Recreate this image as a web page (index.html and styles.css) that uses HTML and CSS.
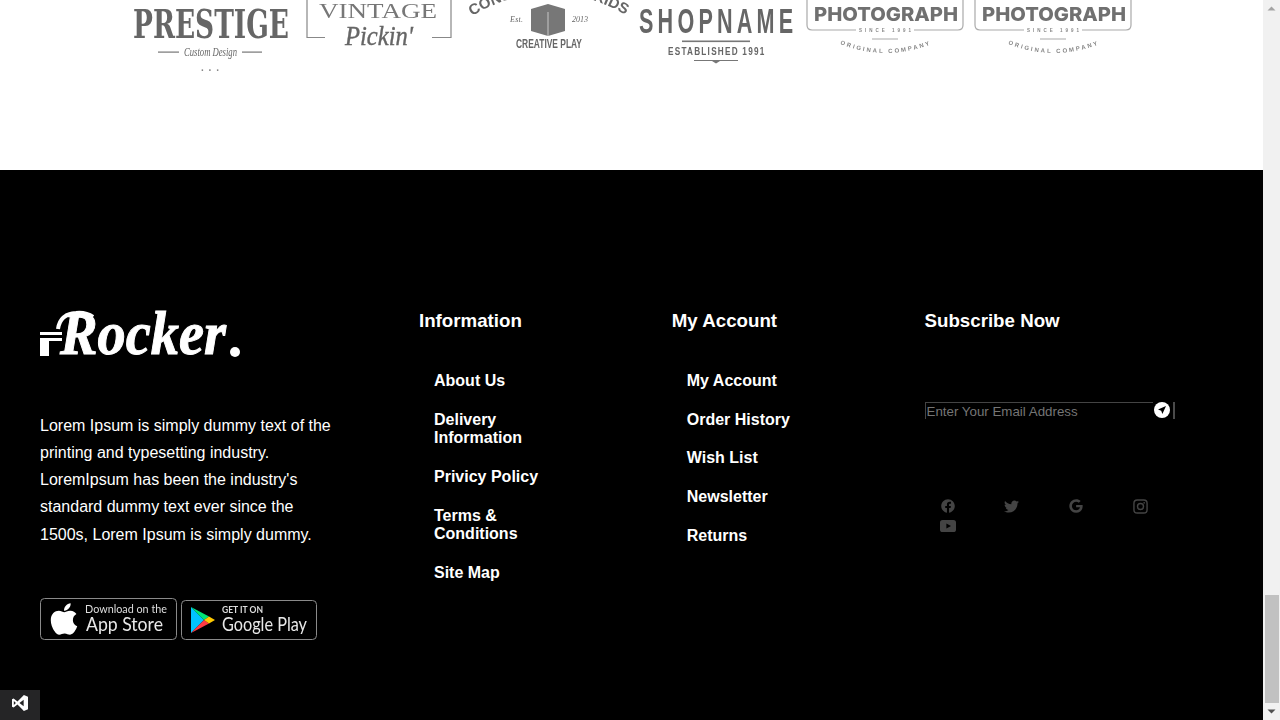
FILE: index.html
```html
<!DOCTYPE html>
<html lang="en">
<head>
<meta charset="utf-8">
<title>Rocker</title>
<link rel="stylesheet" href="styles.css">
</head>
<body>
<div class="page">
  <section class="brands">
    <svg class="brand" viewBox="133 0 156 72" width="156" height="72">
      <text class="t-serif" x="133" y="38" font-size="39" textLength="156" lengthAdjust="spacingAndGlyphs">PRESTIGE</text>
      <rect class="fill" x="158" y="51.5" width="21" height="1.2"/><rect class="fill" x="242" y="51.5" width="20" height="1.2"/>
      <text class="t-script" x="184" y="56" font-size="12" textLength="53" lengthAdjust="spacingAndGlyphs">Custom Design</text>
      <text class="t-bold" x="201" y="71" font-size="10" textLength="18">...</text>
    </svg>
    <svg class="brand" viewBox="301 0 156 72" width="156" height="72">
      <path class="line" d="M307 0V37.5H325M451 0V37.5H432"/>
      <text class="t-serif-light" x="319" y="18" font-size="21" textLength="118" lengthAdjust="spacingAndGlyphs">VINTAGE</text>
      <text class="t-pick" x="345" y="45" font-size="27" textLength="68" lengthAdjust="spacingAndGlyphs">Pickin'</text>
    </svg>
    <svg class="brand" viewBox="470 0 156 72" width="156" height="72">
      <defs><path id="arc" d="M472 16 Q549 -30 628 16"/></defs>
      <text class="t-cond" font-size="15"><textPath href="#arc" textLength="162" lengthAdjust="spacingAndGlyphs">CONSTRUCTION KIDS</textPath></text>
      <path class="fill" d="M531 9 548 4 565 9V31L548 36 531 31Z"/>
      <path d="M548 12V36" stroke="#fff" stroke-width=".6"/>
      <text class="t-script" x="510" y="22" font-size="8" textLength="13">Est.</text>
      <text class="t-script" x="572" y="22" font-size="8" textLength="16">2013</text>
      <text class="t-cond" x="516" y="48" font-size="12" textLength="66" lengthAdjust="spacingAndGlyphs">CREATIVE PLAY</text>
    </svg>
    <svg class="brand" viewBox="638 0 156 72" width="156" height="72">
      <text class="t-cond" transform="translate(639 33) scale(.6 1)" font-size="36" letter-spacing="7">SHOPNAME</text>
      <rect class="fill" x="682" y="40.5" width="68" height="1.6"/>
      <text class="t-cond" transform="translate(668 55) scale(.78 1)" font-size="10.5" letter-spacing="1.6">ESTABLISHED 1991</text>
      <path class="fill" d="M694 60H738V61H720L716 63.5 712 61H694Z"/>
    </svg>
    <svg class="brand" viewBox="806 0 156 72" width="156" height="72">
      <defs><path id="arc5" d="M840 44 Q885 62 932 44"/></defs>
      <path class="line-soft" d="M807 0V25Q807 30 812 30H856M914 30H958Q963 30 963 25V0M872 39H898"/>
      <text class="t-wide" x="814" y="21" font-size="19" textLength="144" lengthAdjust="spacingAndGlyphs">PHOTOGRAPH</text>
      <text class="t-bold" x="859" y="32" font-size="4.5" textLength="52">SINCE 1991</text>
      <text class="t-bold" font-size="6"><textPath href="#arc5" textLength="92">ORIGINAL COMPANY</textPath></text>
    </svg>
    <svg class="brand" viewBox="806 0 156 72" width="156" height="72">
      <path class="line-soft" d="M807 0V25Q807 30 812 30H856M914 30H958Q963 30 963 25V0M872 39H898"/>
      <text class="t-wide" x="814" y="21" font-size="19" textLength="144" lengthAdjust="spacingAndGlyphs">PHOTOGRAPH</text>
      <text class="t-bold" x="859" y="32" font-size="4.5" textLength="52">SINCE 1991</text>
      <text class="t-bold" font-size="6"><textPath href="#arc5" textLength="92">ORIGINAL COMPANY</textPath></text>
    </svg>
  </section>

  <footer class="footer">
    <div class="col col-about">
      <svg class="logo" viewBox="0 0 200 50" width="200" height="50">
        <path class="logo-swash" d="M18 19Q20 4 36 3Q46 2 53 7" />
        <rect x="0" y="22" width="22" height="3" fill="#fff"/>
        <path d="M0 28H22V31H9V46H0Z" fill="#fff"/>
        <text class="logo-word" x="20" y="44" font-size="62" textLength="166" lengthAdjust="spacingAndGlyphs">Rocker</text>
        <circle cx="195" cy="42" r="5" fill="#fff"/>
      </svg>
      <p class="about">Lorem Ipsum is simply dummy text of the printing and typesetting industry. LoremIpsum has been the industry's standard dummy text ever since the 1500s, Lorem Ipsum is simply dummy.</p>
      <div class="badges">
        <svg class="badge" viewBox="0 0 137 42" width="137" height="42">
          <rect class="badge-frame" x=".5" y=".5" width="136" height="41" rx="4"/>
          <svg x="10" y="3" width="28" height="36" viewBox="0 0 384 512"><path fill="#fff" d="M318.7 268.7c-.2-36.7 16.4-64.4 50-84.8-18.8-26.9-47.2-41.7-84.7-44.6-35.5-2.8-74.3 20.7-88.5 20.7-15 0-49.4-19.7-76.4-19.7C63.3 141.2 4 184.8 4 273.5q0 39.3 14.4 81.2c12.8 36.7 59 126.7 107.2 125.2 25.2-.6 43-17.9 75.8-17.9 31.8 0 48.3 17.9 76.4 17.9 48.6-.7 90.4-82.5 102.6-119.3-65.2-30.7-61.7-90-61.7-91.9zm-56.6-164.2c27.3-32.4 24.8-61.9 24-72.5-24.1 1.4-52 16.4-67.9 34.9-17.5 19.8-27.8 44.3-25.6 71.9 26.1 2 49.9-11.4 69.5-34.3z"/></svg>
          <text class="badge-small" x="45" y="15" font-size="11" textLength="82" lengthAdjust="spacingAndGlyphs">Download on the</text>
          <text class="badge-big" x="46" y="33" font-size="20" textLength="77" lengthAdjust="spacingAndGlyphs">App Store</text>
        </svg>
        <svg class="badge" viewBox="0 0 136 40" width="136" height="40">
          <rect class="badge-frame" x=".5" y=".5" width="135" height="39" rx="4"/>
          <path fill="#00c3ff" d="M10 7V33L23 20Z"/>
          <path fill="#00e676" d="M10 7 28 16.5 23 20Z"/>
          <path fill="#ff3a44" d="M10 33 28 23.5 23 20Z"/>
          <path fill="#ffc900" d="M28 16.5 34 20 28 23.5 23 20Z"/>
          <text class="badge-tiny" x="41" y="13" font-size="8.5" textLength="41" lengthAdjust="spacingAndGlyphs">GET IT ON</text>
          <text class="badge-big" x="41" y="31" font-size="19" textLength="85" lengthAdjust="spacingAndGlyphs">Google Play</text>
        </svg>
      </div>
    </div>

    <div class="col">
      <h3 class="col-title">Information</h3>
      <ul class="links">
        <li>About Us</li>
        <li>Delivery Information</li>
        <li>Privicy Policy</li>
        <li>Terms &amp; Conditions</li>
        <li>Site Map</li>
      </ul>
    </div>

    <div class="col">
      <h3 class="col-title">My Account</h3>
      <ul class="links">
        <li>My Account</li>
        <li>Order History</li>
        <li>Wish List</li>
        <li>Newsletter</li>
        <li>Returns</li>
      </ul>
    </div>

    <div class="col">
      <h3 class="col-title">Subscribe Now</h3>
      <form class="subscribe">
        <input class="email" type="text" placeholder="Enter Your Email Address">
        <span class="send">
          <svg viewBox="0 0 16 16" width="16" height="16"><circle cx="8" cy="8" r="8" fill="#fff"/><path d="M12 4 4 7.6 7.2 8.8 8.4 12Z"/></svg>
        </span>
      </form>
      <div class="socials">
        <span class="social"><svg class="ico-14" viewBox="0 0 512 512"><path d="M504 256C504 119 393 8 256 8S8 119 8 256c0 123.78 90.69 226.38 209.25 245V327.69h-63V256h63v-54.64c0-62.15 37-96.48 93.67-96.48 27.14 0 55.52 4.84 55.52 4.84v61h-31.28c-30.8 0-40.41 19.12-40.41 38.73V256h68.78l-11 71.69h-57.78V501C413.31 482.38 504 379.78 504 256z"/></svg></span>
        <span class="social"><svg class="ico-15" viewBox="0 0 512 512"><path d="M459.37 151.716c.325 4.548.325 9.097.325 13.645 0 138.72-105.583 298.558-298.558 298.558-59.452 0-114.68-17.219-161.137-47.106 8.447.974 16.568 1.299 25.34 1.299 49.055 0 94.213-16.568 130.274-44.832-46.132-.975-84.792-31.188-98.112-72.772 6.498.974 12.995 1.624 19.818 1.624 9.421 0 18.843-1.3 27.614-3.573-48.081-9.747-84.143-51.98-84.143-102.985v-1.299c13.969 7.797 30.214 12.67 47.431 13.319-28.264-18.843-46.781-51.005-46.781-87.391 0-19.492 5.197-37.36 14.294-52.954 51.655 63.675 129.3 105.258 216.365 109.807-1.624-7.797-2.599-15.918-2.599-24.04 0-57.828 46.782-104.934 104.934-104.934 30.213 0 57.502 12.67 76.67 33.137 23.715-4.548 46.456-13.32 66.599-25.34-7.798 24.366-24.366 44.833-46.132 57.827 21.117-2.273 41.584-8.122 60.426-16.243-14.292 20.791-32.161 39.308-52.628 54.253z"/></svg></span>
        <span class="social"><svg class="ico-14" viewBox="0 0 488 512"><path d="M488 261.8C488 403.3 391.1 504 248 504 110.8 504 0 393.2 0 256S110.8 8 248 8c66.8 0 123 24.5 166.3 64.9l-67.5 64.9C258.5 52.6 94.3 116.6 94.3 256c0 86.5 69.1 156.6 153.7 156.6 98.2 0 135-70.4 140.8-106.9H248v-85.3h236.1c2.3 12.7 3.9 24.9 3.9 41.4z"/></svg></span>
        <span class="social"><svg class="ico-15" viewBox="0 0 16 16"><rect class="ig" x="1" y="1" width="14" height="14" rx="3.5"/><circle class="ig" cx="8" cy="8" r="3.2"/><circle cx="11.9" cy="4.1" r=".9"/></svg></span>
        <span class="social"><svg class="ico-16" viewBox="0 0 16 16"><rect x="0" y="2" width="16" height="12" rx="2.6"/><path fill="#000" d="M6.4 5.4 11 8 6.4 10.6Z"/></svg></span>
      </div>
    </div>
  </footer>

  <div class="vs-badge">
    <svg viewBox="1 1 14 14" width="16" height="16"><path fill="#fff" fill-rule="evenodd" d="M11.4 1 5.8 6.6 2.4 4 1 4.7V11.3L2.4 12 5.8 9.4 11.4 15 15 13.5V2.5ZM11.2 5.2V10.8L7.5 8ZM2.6 6.3 4.4 8 2.6 9.7Z"/></svg>
  </div>
</div>

<div class="scrollbar">
  <div class="arrow"><svg viewBox="0 0 17 17" width="17" height="17"><path fill="#a3a3a3" d="M4.5 10.5 8.5 6.5 12.5 10.5Z"/></svg></div>
  <div class="track"><div class="thumb"></div></div>
  <div class="arrow"><svg viewBox="0 0 17 17" width="17" height="17"><path fill="#505050" d="M4.5 6.5H12.5L8.5 10.5Z"/></svg></div>
</div>
</body>
</html>
```

FILE: styles.css
```css
* { box-sizing: border-box; }

html, body {
  margin: 0;
  height: 720px;
  overflow: hidden;
}

body {
  display: flex;
  font-family: "Liberation Sans", Arial, sans-serif;
  background: #fff;
}

.page {
  position: relative;
  width: 1263px;
  height: 720px;
  overflow: hidden;
}

/* brand strip */
.brands {
  height: 170px;
  padding-left: 133px;
  display: flex;
  align-items: flex-start;
  gap: 12.3px;
}

.brand {
  flex: none;
  fill: #666;
  overflow: visible;
  filter: blur(0.5px);
}

.fill { fill: #777; }
.line { fill: none; stroke: #888; stroke-width: 1.2; }
.line-soft { fill: none; stroke: #aaa; stroke-width: 1.2; }
.t-serif { font-family: "DejaVu Serif Condensed", "Liberation Serif", serif; font-weight: 700; }
.t-serif-light { font-family: "Liberation Serif", serif; fill: #777; }
.t-script { font-family: "Liberation Serif", serif; font-style: italic; }
.t-pick { font-family: "Liberation Serif", serif; font-style: italic; stroke: #666; stroke-width: 0.4; }
.t-cond { font-family: "Liberation Sans", sans-serif; font-weight: 700; }
.t-wide { font-family: Inter, "Open Sans", sans-serif; font-weight: 800; fill: #707070; }
.t-bold { font-family: "Liberation Sans", sans-serif; font-weight: 700; fill: #888; }

/* footer */
.footer {
  height: 550px;
  background: #000;
  color: #fff;
  padding: 140px 85px 0 40px;
  display: grid;
  grid-template-columns: 379px 252.75px 252.75px 253px;
}

.logo { display: block; overflow: visible; margin-bottom: 51.7px; }
.logo-word { font-family: "Liberation Serif", serif; font-weight: 700; font-style: italic; fill: #fff; stroke: #fff; stroke-width: 1; }
.logo-swash { fill: none; stroke: #fff; stroke-width: 4; }

.about {
  margin: 0;
  width: 300px;
  font-size: 16px;
  line-height: 27.2px;
}

.badges {
  margin-top: 50.5px;
  display: flex;
  align-items: flex-end;
  gap: 4px;
}

.badge { flex: none; filter: blur(0.3px); }
.badge-frame { fill: #000; stroke: #8a8a8a; }
.badge-small { font-family: Lato, sans-serif; fill: #ddd; }
.badge-big { font-family: Lato, sans-serif; fill: #e8e8e8; }
.badge-tiny { font-family: Lato, sans-serif; font-weight: 700; fill: #ddd; }

.col-title {
  margin: 0;
  font-size: 18.72px;
  line-height: 21px;
  font-weight: 700;
}

.links {
  list-style: none;
  margin: 40.9px 0 0;
  padding: 0 0 0 15px;
  display: flex;
  flex-direction: column;
  gap: 20.4px;
}

.links li {
  max-width: 130px;
  font-size: 16px;
  line-height: 18.4px;
  font-weight: 700;
}

.subscribe {
  margin-top: 71px;
  width: 250px;
  height: 17px;
  display: flex;
  align-items: flex-start;
}

.email {
  flex: 1;
  min-width: 0;
  height: 17px;
  padding: 0 0 0 1px;
  border: 0;
  border-top: 1.5px solid #444;
  border-left: 1px solid #444;
  outline: 0;
  background: transparent;
  color: #fff;
  font: 13.33px "Liberation Sans", Arial, sans-serif;
}

.email::placeholder { color: #757575; opacity: 1; }

.send {
  width: 22px;
  height: 17px;
  padding-left: 1px;
  display: flex;
  justify-content: flex-start;
  border-right: 2px solid #4a4a4a;
}

.socials {
  margin-top: 79px;
  padding-left: 15px;
  display: flex;
  flex-wrap: wrap;
  gap: 4px 48.3px;
}

.social {
  width: 16px;
  height: 16px;
  display: flex;
  align-items: center;
  justify-content: center;
  fill: #444;
  flex: none;
}

.ico-14 { width: 14px; height: 14px; }
.ico-15 { width: 15px; height: 15px; }
.ico-16 { width: 16px; height: 16px; }
.ig { fill: none; stroke: #444; stroke-width: 1.5; }

/* corner badge */
.vs-badge {
  position: absolute;
  left: 0;
  bottom: 0;
  width: 40px;
  height: 30px;
  padding-top: 5px;
  background: #252526;
  display: flex;
  align-items: flex-start;
  justify-content: center;
}

/* scrollbar */
.scrollbar {
  flex: none;
  width: 17px;
  height: 720px;
  background: #f1f1f1;
  display: flex;
  flex-direction: column;
}

.arrow { height: 17px; flex: none; line-height: 0; }
.track { flex: 1; display: flex; flex-direction: column; justify-content: flex-end; padding: 0 1.5px; }
.thumb { height: 108px; background: #c1c1c1; }
```
